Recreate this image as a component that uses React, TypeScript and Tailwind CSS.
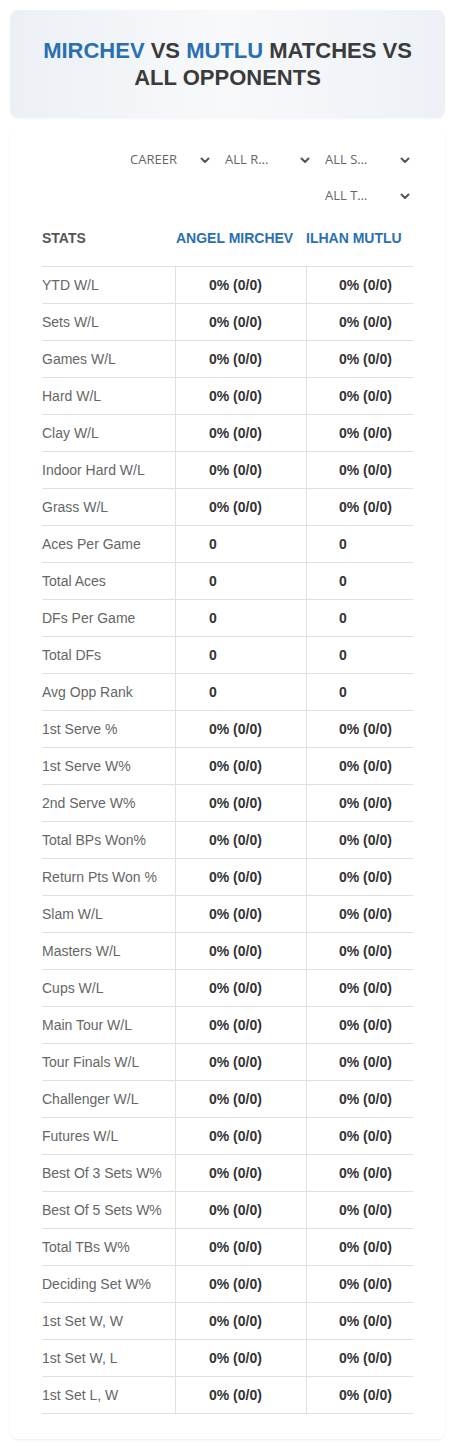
const rows: [string, boolean][] = [
  ["YTD W/L", true],
  ["Sets W/L", true],
  ["Games W/L", true],
  ["Hard W/L", true],
  ["Clay W/L", true],
  ["Indoor Hard W/L", true],
  ["Grass W/L", true],
  ["Aces Per Game", false],
  ["Total Aces", false],
  ["DFs Per Game", false],
  ["Total DFs", false],
  ["Avg Opp Rank", false],
  ["1st Serve %", true],
  ["1st Serve W%", true],
  ["2nd Serve W%", true],
  ["Total BPs Won%", true],
  ["Return Pts Won %", true],
  ["Slam W/L", true],
  ["Masters W/L", true],
  ["Cups W/L", true],
  ["Main Tour W/L", true],
  ["Tour Finals W/L", true],
  ["Challenger W/L", true],
  ["Futures W/L", true],
  ["Best Of 3 Sets W%", true],
  ["Best Of 5 Sets W%", true],
  ["Total TBs W%", true],
  ["Deciding Set W%", true],
  ["1st Set W, W", true],
  ["1st Set W, L", true],
  ["1st Set L, W", true],
];

const Chevron = () => (
  <svg width="10" height="7" viewBox="0 0 10 7" className="shrink-0">
    <path d="M1.5 1.5 L5 5 L8.5 1.5" fill="none" stroke="#555" strokeWidth="2" strokeLinecap="round" strokeLinejoin="round" />
  </svg>
);

const Select = ({label, first}: {label: string; first?: boolean}) => (
  <div className={`${first ? "w-[90px]" : "w-[95px]"} h-[32px] flex items-center justify-between pl-[5px] pr-[5px] cursor-pointer`}>
    <span className="w-[48px] overflow-hidden text-ellipsis whitespace-nowrap text-[13px] text-[#666] font-[family-name:'Open_Sans',sans-serif]">
      {label}
    </span>
    <Chevron />
  </div>
);

export default function App() {
  return (
    <main className="w-[455px] bg-white pt-[10px] pb-[10px] font-[family-name:'Liberation_Sans',Arial,sans-serif]">
      {/* title card */}
      <section className="mx-[10px] rounded-lg bg-linear-to-r from-[#ecf0f5] via-[#f8f9fb] to-[#edf1f6] shadow-[0_1px_2px_rgba(0,0,0,0.04)] px-8 py-[27px]">
        <h1 className="text-center text-[22px] leading-[27px] font-bold text-[#3b3b3b] uppercase">
          <span className="text-[#2a70b1]">Mirchev</span> vs <span className="text-[#2a70b1]">Mutlu</span> matches vs all opponents
        </h1>
      </section>

      {/* stats card */}
      <section className="mx-[10px] mt-[12px] rounded-lg bg-white shadow-[0_1px_2px_rgba(0,0,0,0.08)] pl-[32px] pr-[32px] pt-[14px] pb-[25px]">
        <div className="flex flex-wrap justify-end gap-x-[5px] gap-y-[4px] -mr-[2px]">
          <Select label="CAREER" first />
          <Select label="ALL ROUNDS" />
          <Select label="ALL SURFACES" />
          <Select label="ALL TOURNAMENTS" />
        </div>

        <div className="grid grid-cols-[133px_131px_107px] h-[55px] pt-[16px] text-[14px] leading-[20px] font-bold border-b border-[#e0e0e0]">
          <div className="text-[#555]">STATS</div>
          <div className="pl-[1px] text-[#2a70b1] whitespace-nowrap">ANGEL MIRCHEV</div>
          <div className="text-[#2a70b1] whitespace-nowrap">ILHAN MUTLU</div>
        </div>

        {rows.map(([label, pct]) => (
          <div key={label} className="grid grid-cols-[133px_131px_107px] h-[37px] border-b border-[#e0e0e0] text-[14px]">
            <div className="flex items-center text-[#666]">{label}</div>
            <div className="flex items-center pl-[33px] border-l border-[#e0e0e0] font-bold text-[#333]">{pct ? "0% (0/0)" : "0"}</div>
            <div className="flex items-center pl-[32px] border-l border-[#e0e0e0] font-bold text-[#333]">{pct ? "0% (0/0)" : "0"}</div>
          </div>
        ))}
      </section>
    </main>
  );
}
